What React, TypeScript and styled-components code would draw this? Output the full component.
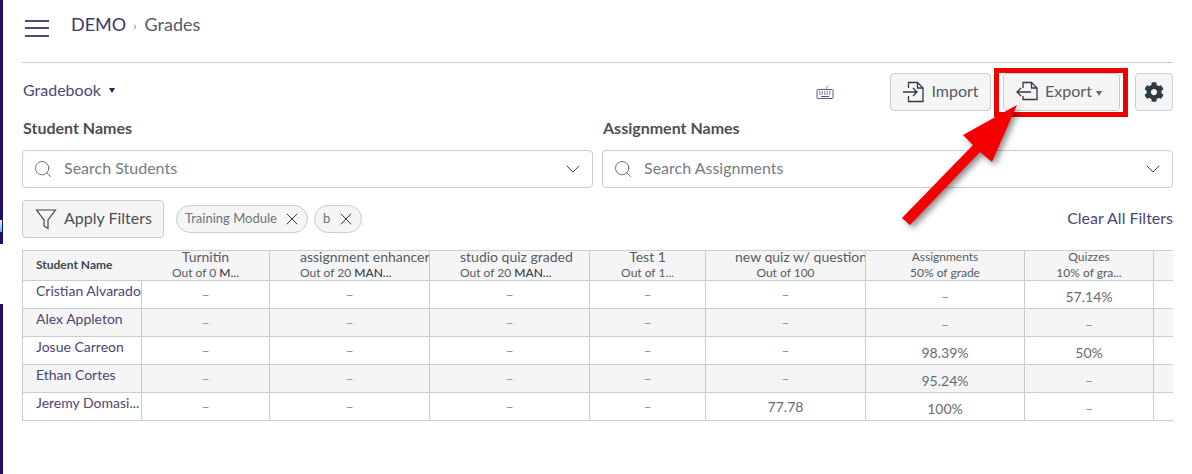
import React from "react";
import styled, { createGlobalStyle } from "styled-components";
import { FaCog } from "react-icons/fa";
import { Search, ChevronDown, X } from "lucide-react";

const GlobalStyle = createGlobalStyle`
  html, body {
    margin: 0;
    padding: 0;
    background: #fff;
    font-family: Lato, "Open Sans", "Liberation Sans", sans-serif;
    color: #3f4650;
  }
`;

const Page = styled.div`
  position: relative;
  display: flex;
  width: 1192px;
  height: 474px;
  overflow: hidden;
`;

const Rail = styled.div`
  display: flex;
  flex-direction: column;
  justify-content: space-between;
  width: 3px;
  flex: none;
`;

const RailPiece = styled.div<{ $height: number }>`
  position: relative;
  height: ${(p) => p.$height}px;
  background: #230a68;
`;

// sliver of another window showing through the rail
const RailSliver = styled.div`
  position: absolute;
  left: 0;
  top: 220px;
  width: 2px;
  height: 12px;
  background: linear-gradient(#e8f4fb, #4fb3e8);
`;

const Main = styled.main`
  flex: 1;
  min-width: 0;
  padding: 0 19px;
`;

const Header = styled.header`
  display: flex;
  align-items: center;
  height: 63px;
  padding-bottom: 14px;
  box-sizing: border-box;
  border-bottom: 1px solid #c7cdd1;
`;

const Hamburger = styled.div`
  display: flex;
  flex-direction: column;
  gap: 5.5px;
  width: 24px;
  margin-left: 3px;
  margin-right: 22px;
  padding-top: 8px;
`;

const HamburgerLine = styled.span`
  display: block;
  height: 2px;
  background: #4f4b6e;
`;

const Crumbs = styled.nav`
  display: flex;
  align-items: center;
  font-size: 18px;
  line-height: 24px;
`;

const CrumbLink = styled.span`
  color: #3f3570;
`;

const CrumbSep = styled.span`
  margin: 4px 8px 0 7px;
  font-size: 12px;
  color: #7a8087;
`;

const CrumbCurrent = styled.span`
  color: #565c64;
`;

const Toolbar = styled.div`
  display: flex;
  align-items: center;
  height: 38px;
  margin-top: 10px;
`;

const ViewMenu = styled.div`
  display: flex;
  align-items: center;
  gap: 8px;
  font-size: 16px;
  color: #4d4577;
  margin-bottom: 5px;
  margin-left: 1px;
`;

const Caret = styled.span<{ $color?: string; $nudge?: number }>`
  display: inline-block;
  width: 0;
  height: 0;
  border-left: 3.5px solid transparent;
  border-right: 3.5px solid transparent;
  border-top: 5px solid ${(p) => p.$color || "#2d1a66"};
  margin-top: 2px;
  margin-left: ${(p) => p.$nudge || 0}px;
`;

const KeyboardIcon = styled.svg`
  margin-left: auto;
  margin-right: 56px;
  margin-top: 0;
`;

const ToolButton = styled.button<{ $width: number; $gap?: number; $shift?: number }>`
  display: flex;
  align-items: center;
  justify-content: center;
  gap: 7px;
  width: ${(p) => p.$width}px;
  height: 38px;
  margin-left: ${(p) => p.$gap || 0}px;
  padding: 0 ${(p) => p.$shift || 0}px 0 0;
  background: #f5f5f5;
  border: 1px solid #c7cdd1;
  border-radius: 4px;
  font-family: inherit;
  font-size: 16px;
  color: #565c64;
  box-sizing: border-box;
`;

const Lifted = styled.span`
  margin-bottom: 4px;
`;

const LabelRow = styled.div`
  display: flex;
  gap: 9px;
  margin-top: 6px;
`;

const FilterColumn = styled.div`
  flex: 1;
  min-width: 0;
`;

const FieldLabel = styled.div`
  font-size: 16px;
  font-weight: 700;
  line-height: 22px;
  color: #4a5058;
  margin-bottom: 11px;
  padding-left: 1px;
`;

const SearchBox = styled.div`
  display: flex;
  align-items: center;
  height: 38px;
  padding: 0 7px 0 10px;
  box-sizing: border-box;
  background: #fff;
  border: 1px solid #c7cdd1;
  border-radius: 4px;
  color: #5f6770;
`;

const Placeholder = styled.span`
  flex: 1;
  margin-left: 11px;
  margin-bottom: 4px;
  font-size: 16px;
  color: #737c85;
`;

const FilterRow = styled.div`
  display: flex;
  align-items: center;
  margin-top: 12px;
  height: 38px;
`;

const ApplyButton = styled.button`
  display: flex;
  align-items: center;
  gap: 7px;
  width: 142px;
  height: 38px;
  padding: 0 0 0 12px;
  background: #f5f5f5;
  border: 1px solid #c7cdd1;
  border-radius: 4px;
  box-sizing: border-box;
  font-family: inherit;
  font-size: 16px;
  color: #4a5058;
`;

const Chip = styled.span<{ $first?: boolean }>`
  display: flex;
  align-items: center;
  gap: ${(p) => (p.$first ? 5 : 6)}px;
  height: 28px;
  margin-left: ${(p) => (p.$first ? 12 : 6)}px;
  padding: 0 5px 0 8px;
  box-sizing: border-box;
  background: #f5f5f5;
  border: 1px solid #c7cdd1;
  border-radius: 14px;
  font-size: 13px;
  color: #6b737b;
`;

const ChipText = styled.span`
  margin-bottom: 2px;
`;

const ClearLink = styled.span`
  margin-left: auto;
  margin-bottom: 4px;
  font-size: 16px;
  color: #4d4577;
`;

const TableWrap = styled.div`
  margin-top: 12px;
  width: 1151px;
  overflow: hidden;
`;

const Grid = styled.table`
  table-layout: fixed;
  border-collapse: separate;
  border-spacing: 0;
  width: 1151px;
  border-top: 1px solid #c7cdd1;
  border-left: 1px solid #c7cdd1;
`;

const HeadCell = styled.th<{ $noBorder?: boolean }>`
  height: 29px;
  padding: 0;
  background: #f5f5f5;
  border-bottom: 1px solid #c7cdd1;
  border-right: ${(p) => (p.$noBorder ? "none" : "1px solid #c7cdd1")};
  font-weight: 400;
  overflow-x: clip;
  overflow-y: visible;
  white-space: nowrap;
  vertical-align: top;
`;

const NameHead = styled.div`
  font-size: 12px;
  font-weight: 700;
  line-height: 28px;
  padding-left: 13px;
  text-align: left;
  color: #3f4650;
`;

const ColTitle = styled.div<{ $inset?: number; $small?: boolean }>`
  font-size: ${(p) => (p.$small ? 12 : 14)}px;
  line-height: 11px;
  color: #565c64;
  text-align: ${(p) => (p.$inset ? "left" : "center")};
  padding-left: ${(p) => p.$inset || 0}px;
`;

const ColSub = styled.div<{ $inset?: number }>`
  font-size: 12px;
  line-height: 14px;
  margin-top: 4px;
  color: #565c64;
  text-align: ${(p) => (p.$inset ? "left" : "center")};
  padding-left: ${(p) => p.$inset || 0}px;

  b {
    font-weight: 500;
    color: #2d3b45;
  }
`;

const Row = styled.tr<{ $shaded: boolean }>`
  background: ${(p) => (p.$shaded ? "#f5f5f5" : "#fff")};
`;

const NameCell = styled.td`
  height: 26px;
  padding: 1px 0 0 13px;
  box-sizing: content-box;
  font-size: 14px;
  line-height: 18px;
  color: #4d4577;
  border-bottom: 1px solid #c7cdd1;
  border-right: 1px solid #c7cdd1;
  white-space: nowrap;
  overflow: hidden;
  vertical-align: top;
`;

const ScoreCell = styled.td<{ $lower?: boolean }>`
  padding: ${(p) => (p.$lower ? 6 : 4)}px 0 0;
  font-size: 14px;
  line-height: 20px;
  color: #656c74;
  text-align: center;
  border-bottom: 1px solid #c7cdd1;
  border-right: 1px solid #c7cdd1;
  vertical-align: top;
`;

const Dash = styled.span`
  color: #8b9096;
  font-size: 14px;
`;

const Callout = styled.div`
  position: absolute;
  left: 994px;
  top: 68px;
  width: 134px;
  height: 49px;
  box-sizing: border-box;
  border: 5px solid #f00000;
`;

const Arrow = styled.svg`
  position: absolute;
  left: 890px;
  top: 95px;
  filter: drop-shadow(3px 3px 3px rgba(0, 0, 0, 0.45));
`;

const columns = [119, 128, 160, 160, 116, 160, 159, 129, 20];

const names = ["Cristian Alvarado", "Alex Appleton", "Josue Carreon", "Ethan Cortes", "Jeremy Domasi..."];

const scores = [
  ["–", "–", "–", "–", "–", "–", "57.14%"],
  ["–", "–", "–", "–", "–", "–", "–"],
  ["–", "–", "–", "–", "–", "98.39%", "50%"],
  ["–", "–", "–", "–", "–", "95.24%", "–"],
  ["–", "–", "–", "–", "77.78", "100%", "–"],
];

function ImportIcon() {
  return (
    <svg width="22" height="22" viewBox="0 0 22 22" fill="none" stroke="#2f3a44" strokeWidth="1.3">
      <path d="M6.5 7V1.5H15.5L21 7V20.5H6.5V15" />
      <path d="M15.5 1.5V7H21" />
      <path d="M1 11H15M11 7L15 11L11 15" />
    </svg>
  );
}

function ExportIcon() {
  return (
    <svg width="22" height="22" viewBox="0 0 22 22" fill="none" stroke="#2f3a44" strokeWidth="1.3">
      <path d="M7 7V1.5H15.5L21 7V18.5H7V15" />
      <path d="M15.5 1.5V7H21" />
      <path d="M15 11H1M5 7L1 11L5 15" />
    </svg>
  );
}

function FilterIcon() {
  return (
    <svg width="22" height="22" viewBox="0 0 22 22" fill="none" stroke="#3f4650" strokeWidth="1.2">
      <path d="M1.5 2H20.5L13 12V20.5L9 18V12Z" />
    </svg>
  );
}

export default function App() {
  return (
    <Page>
      <GlobalStyle />
      <Rail>
        <RailPiece $height={244}>
          <RailSliver />
        </RailPiece>
        <RailPiece $height={170} />
      </Rail>
      <Main>
        <Header>
          <Hamburger>
            <HamburgerLine />
            <HamburgerLine />
            <HamburgerLine />
          </Hamburger>
          <Crumbs>
            <CrumbLink>DEMO</CrumbLink>
            <CrumbSep>›</CrumbSep>
            <CrumbCurrent>Grades</CrumbCurrent>
          </Crumbs>
        </Header>

        <Toolbar>
          <ViewMenu>
            Gradebook <Caret />
          </ViewMenu>
          <KeyboardIcon width="18" height="16" viewBox="0 0 18 16" fill="none">
            <rect x="1" y="5.5" width="16" height="9" rx="1" stroke="#5b5a9a" />
            <path d="M3 8H15M3 10H15" stroke="#5b4a8a" strokeDasharray="1.5 1" />
            <path d="M5 12.5H13" stroke="#5b4a8a" />
            <path d="M10 5L12 1.5" stroke="#a87a6a" />
          </KeyboardIcon>
          <ToolButton $width={101}>
            <ImportIcon />
            <Lifted>Import</Lifted>
          </ToolButton>
          <ToolButton $width={117} $gap={12} $shift={5}>
            <ExportIcon />
            <Lifted>Export</Lifted>
            <Caret $color="#5f6770" $nudge={-3} />
          </ToolButton>
          <ToolButton $width={38} $gap={15}>
            <FaCog size={20} color="#2d3b45" />
          </ToolButton>
        </Toolbar>

        <LabelRow>
          <FilterColumn>
            <FieldLabel>Student Names</FieldLabel>
            <SearchBox>
              <Search size={20} strokeWidth={1.1} />
              <Placeholder>Search Students</Placeholder>
              <ChevronDown size={24} strokeWidth={1} color="#3f4650" />
            </SearchBox>
          </FilterColumn>
          <FilterColumn>
            <FieldLabel>Assignment Names</FieldLabel>
            <SearchBox>
              <Search size={20} strokeWidth={1.1} />
              <Placeholder>Search Assignments</Placeholder>
              <ChevronDown size={24} strokeWidth={1} color="#3f4650" />
            </SearchBox>
          </FilterColumn>
        </LabelRow>

        <FilterRow>
          <ApplyButton>
            <FilterIcon />
            <Lifted>Apply Filters</Lifted>
          </ApplyButton>
          <Chip $first>
            <ChipText>Training Module</ChipText> <X size={20} strokeWidth={1.2} color="#2d3b45" />
          </Chip>
          <Chip>
            <ChipText>b</ChipText> <X size={20} strokeWidth={1.2} color="#2d3b45" />
          </Chip>
          <ClearLink>Clear All Filters</ClearLink>
        </FilterRow>

        <TableWrap>
          <Grid>
            <colgroup>
              {columns.map((w, i) => (
                <col key={i} style={{ width: w }} />
              ))}
            </colgroup>
            <thead>
              <tr>
                <HeadCell $noBorder>
                  <NameHead>Student Name</NameHead>
                </HeadCell>
                <HeadCell>
                  <ColTitle>Turnitin</ColTitle>
                  <ColSub>
                    Out of 0 <b>M...</b>
                  </ColSub>
                </HeadCell>
                <HeadCell>
                  <ColTitle $inset={30}>assignment enhancer</ColTitle>
                  <ColSub $inset={30}>
                    Out of 20 <b>MAN...</b>
                  </ColSub>
                </HeadCell>
                <HeadCell>
                  <ColTitle $inset={30}>studio quiz graded</ColTitle>
                  <ColSub $inset={30}>
                    Out of 20 <b>MAN...</b>
                  </ColSub>
                </HeadCell>
                <HeadCell>
                  <ColTitle>Test 1</ColTitle>
                  <ColSub>Out of 1...</ColSub>
                </HeadCell>
                <HeadCell>
                  <ColTitle $inset={29}>new quiz w/ question</ColTitle>
                  <ColSub>Out of 100</ColSub>
                </HeadCell>
                <HeadCell>
                  <ColTitle $small>Assignments</ColTitle>
                  <ColSub>50% of grade</ColSub>
                </HeadCell>
                <HeadCell>
                  <ColTitle $small>Quizzes</ColTitle>
                  <ColSub>10% of gra...</ColSub>
                </HeadCell>
                <HeadCell $noBorder />
              </tr>
            </thead>
            <tbody>
              {names.map((name, r) => (
                <Row key={name} $shaded={r % 2 === 1}>
                  <NameCell>{name}</NameCell>
                  {scores[r].map((s, c) => (
                    <ScoreCell key={c} $lower={c >= 5}>
                      {s === "–" ? <Dash>–</Dash> : s}
                    </ScoreCell>
                  ))}
                  <ScoreCell />
                </Row>
              ))}
            </tbody>
          </Grid>
        </TableWrap>
      </Main>
      <Callout />
      <Arrow width="140" height="140" viewBox="0 0 140 140">
        <path d="M127 10 L102 67 L90 57 L20 130 L12 123 L83 50 L73 40 Z" fill="#f50000" />
      </Arrow>
    </Page>
  );
}
